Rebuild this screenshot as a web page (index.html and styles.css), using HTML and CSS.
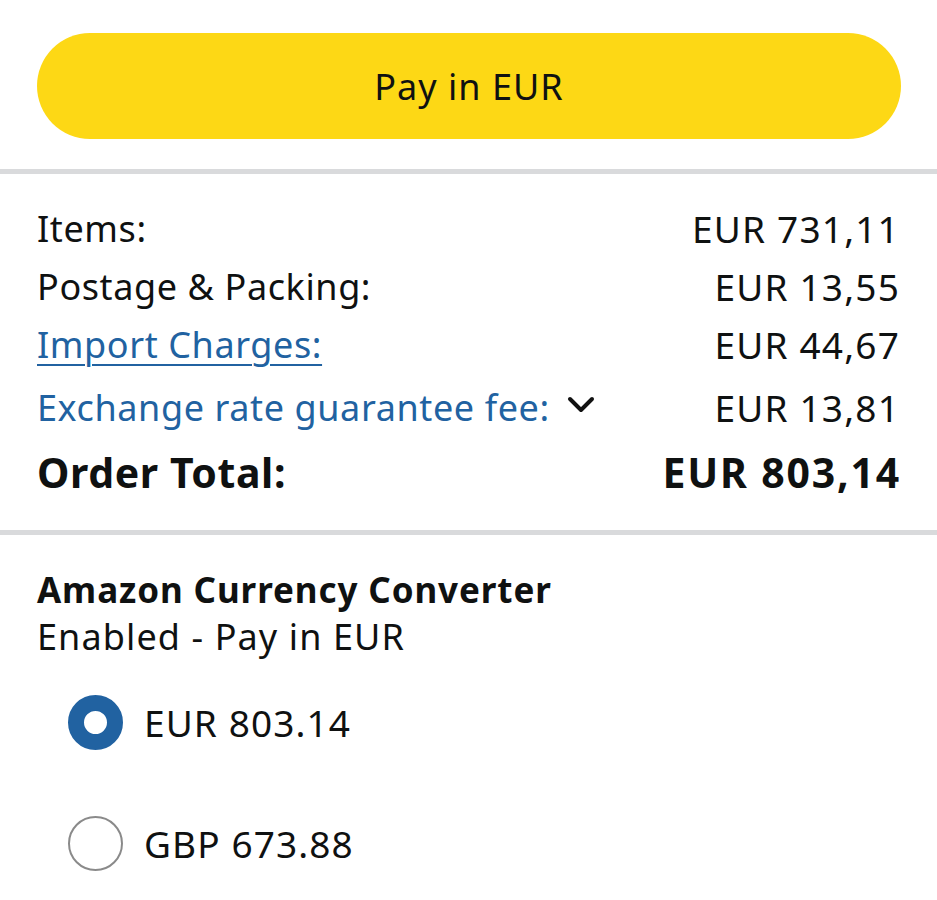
FILE: index.html
```html
<!DOCTYPE html>
<html>
<head>
<meta charset="utf-8">
<link rel="stylesheet" href="styles.css">
</head>
<body>
<div class="page">
  <div class="btn-wrap">
    <div class="pay-btn">Pay in EUR</div>
  </div>
  <div class="divider"></div>
  <div class="summary">
    <div class="row"><span class="label">Items:</span><span class="val">EUR 731,11</span></div>
    <div class="row"><span class="label">Postage &amp; Packing:</span><span class="val">EUR 13,55</span></div>
    <div class="row"><a class="label link">Import Charges:</a><span class="val">EUR 44,67</span></div>
    <div class="row row-fee"><span class="label blue">Exchange rate guarantee fee:<svg class="chev" width="28" height="18" viewBox="0 0 28 18"><path d="M3 3 L14 14 L25 3" fill="none" stroke="#111" stroke-width="4" stroke-linecap="round" stroke-linejoin="round"/></svg></span><span class="val">EUR 13,81</span></div>
    <div class="row total"><span class="label">Order Total:</span><span class="val">EUR 803,14</span></div>
  </div>
  <div class="divider"></div>
  <div class="converter">
    <div class="conv-title">Amazon Currency Converter</div>
    <div class="conv-sub">Enabled - Pay in EUR</div>
    <div class="options">
      <div class="option"><span class="radio checked"></span><span>EUR 803.14</span></div>
      <div class="option"><span class="radio"></span><span>GBP 673.88</span></div>
    </div>
  </div>
</div>
</body>
</html>
```
FILE: styles.css
```css
html, body {
  margin: 0;
  padding: 0;
  background: #fff;
}
.page {
  font-family: "Noto Sans", "Open Sans", sans-serif;
  color: #0f1111;
  width: 937px;
}
.btn-wrap {
  padding: 33px 36px 30px 37px;
}
.pay-btn {
  height: 106px;
  border-radius: 53px;
  background: #fdd815;
  display: flex;
  align-items: center;
  justify-content: center;
  font-size: 36px;
  letter-spacing: 1px;
  color: #0f1111;
}
.divider {
  height: 5px;
  background: #d9dadc;
}
.summary {
  padding: 25px 38px 27px 37px;
  font-size: 36px;
}
.row {
  display: flex;
  justify-content: space-between;
  align-items: center;
  height: 58px;
}
.row-fee {
  height: 68px;
}
.label {
  display: flex;
  align-items: center;
  letter-spacing: 0.6px;
}
.val {
  font-size: 37px;
  letter-spacing: 1.2px;
  margin-right: -1px;
}
.link {
  color: #2162a1;
  text-decoration: underline;
  text-underline-offset: 6px;
  text-decoration-thickness: 2px;
}
.blue {
  color: #2162a1;
}
.chev {
  margin-left: 17px;
  margin-top: -4px;
}
.total {
  font-weight: 700;
  height: 62px;
}
.total .label {
  font-size: 41px;
  letter-spacing: 0.6px;
}
.total .val {
  font-size: 41px;
  letter-spacing: 1.8px;
  margin-right: -2px;
}
.converter {
  padding: 31px 37px 0 37px;
}
.conv-title {
  font-weight: 700;
  font-size: 35px;
  letter-spacing: 0.9px;
  line-height: 48px;
}
.conv-sub {
  font-size: 36px;
  letter-spacing: 1.1px;
  line-height: 46px;
}
.options {
  padding-top: 34px;
  padding-left: 31px;
}
.option {
  display: flex;
  align-items: center;
  height: 56px;
  margin-bottom: 65px;
  font-size: 37px;
  letter-spacing: 1.1px;
  gap: 21px;
}
.radio {
  box-sizing: border-box;
  width: 55px;
  height: 55px;
  border-radius: 50%;
  border: 2.5px solid #8a8a8a;
  background: #fff;
}
.radio.checked {
  border: 16px solid #2162a1;
}
```
